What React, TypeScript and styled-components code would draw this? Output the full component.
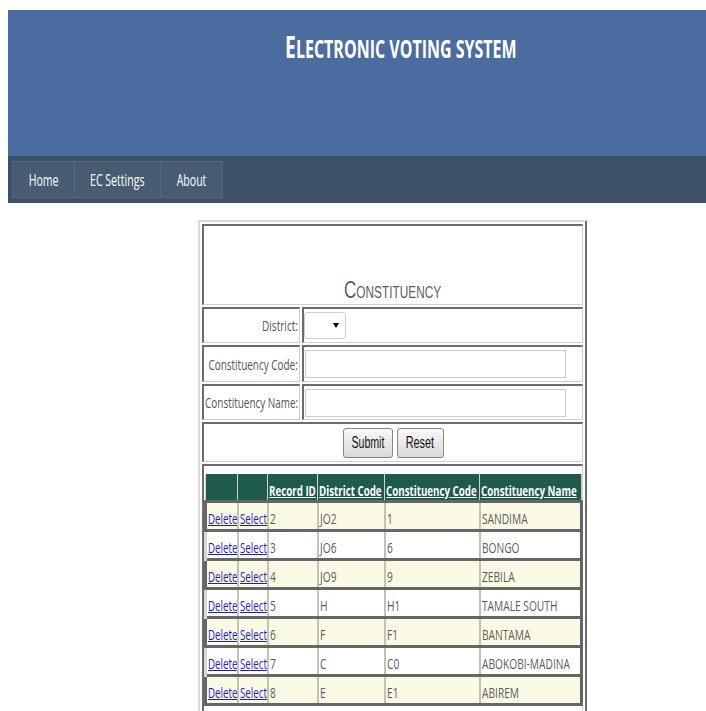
import React from "react";
import styled, { createGlobalStyle } from "styled-components";

const SANS = `"Open Sans", "DejaVu Sans", sans-serif`;
const ARIAL = `"Liberation Sans", Arial, sans-serif`;

const Global = createGlobalStyle`
  html, body { margin: 0; padding: 0; background: #ffffff; }
  body {
    padding: 10px 0 0 8px;
    font-family: ${SANS};
    overflow: hidden;
  }
`;

/* Narrow lettering: the face is drawn horizontally condensed. */
const Narrow = styled.span<{ $sx?: number; $origin?: string }>`
  display: inline-block;
  white-space: nowrap;
  text-decoration: inherit;
  transform: scaleX(${(p) => p.$sx ?? 0.68});
  transform-origin: ${(p) => p.$origin ?? "left"} center;
`;

const Banner = styled.header`
  background: #4b6c9f;
  height: 146px;
  box-sizing: border-box;
  display: flex;
  justify-content: center;
  padding: 17px 0 0 88px;
`;

const SiteTitle = styled.h1`
  margin: 0;
  color: #ffffff;
  font-family: ${SANS};
  font-weight: 700;
  font-size: 25px;
  line-height: 40px;
  text-transform: uppercase;
  &::first-letter { font-size: 30px; }
`;

const NavBar = styled.nav`
  background: #3d5169;
  height: 47px;
  display: flex;
  align-items: center;
  padding-left: 4px;
`;

const NavItem = styled.a<{ $w: number }>`
  width: ${(p) => p.$w}px;
  height: 37px;
  box-sizing: border-box;
  display: flex;
  align-items: center;
  justify-content: center;
  background: #475b73;
  border: 1px solid #53677f;
  margin-right: -1px;
  color: #ffffff;
  font-size: 16px;
  text-decoration: none;
`;

const FormTable = styled.table`
  margin: 17px 0 0 190px;
  width: 389px;
  border-style: solid;
  border-width: 2px;
  border-color: #dadada #6c6c6c #6c6c6c #dadada;
  border-spacing: 2px;
  table-layout: fixed;
`;

const Cell = styled.td<{ $h?: number; $align?: string; $valign?: string }>`
  border-style: solid;
  border-width: 2px 1px 1px 2px;
  border-color: #6c6c6c #d0d0d0 #d0d0d0 #6c6c6c;
  padding: 0;
  height: ${(p) => (p.$h ? `${p.$h}px` : "auto")};
  text-align: ${(p) => p.$align || "left"};
  vertical-align: ${(p) => p.$valign || "middle"};
  box-sizing: border-box;
  color: #555555;
  font-size: 14px;
`;

const LabelBox = styled.div`
  display: flex;
  justify-content: flex-end;
  padding-right: 1px;
`;

const FormTitle = styled.div`
  font-family: ${ARIAL};
  font-variant: small-caps;
  font-size: 23px;
  line-height: 26px;
  color: #5e5e5e;
  padding-bottom: 1px;
`;

const SelectWrap = styled.span`
  position: relative;
  display: inline-block;
  vertical-align: middle;
`;

const DistrictSelect = styled.select`
  appearance: none;
  width: 42px;
  height: 27px;
  border: 1px solid #d0d0d0;
  border-radius: 3px;
  background: #ffffff;
  display: block;
`;

const Caret = styled.span`
  position: absolute;
  right: 7px;
  top: 11px;
  width: 0;
  height: 0;
  border-left: 3px solid transparent;
  border-right: 3px solid transparent;
  border-top: 5px solid #000;
  pointer-events: none;
`;

const TextInput = styled.input`
  width: 261px;
  height: 28px;
  box-sizing: border-box;
  border: 1px solid #cccccc;
  margin: 0 0 0 1px;
  display: block;
`;

const ButtonRow = styled.div`
  display: flex;
  justify-content: center;
  gap: 4px;
`;

const Button = styled.button<{ $w: number }>`
  width: ${(p) => p.$w}px;
  height: 30px;
  padding: 0;
  display: flex;
  align-items: center;
  justify-content: center;
  border: 1px solid #868686;
  border-radius: 3px;
  background: linear-gradient(#f8f8f8, #d9d9d9);
  font-family: ${ARIAL};
  font-size: 16px;
  color: #111;
`;

const GridCell = styled(Cell)`
  padding: 8px 0 12px 0;
  vertical-align: top;
`;

const Grid = styled.table`
  border-collapse: collapse;
  table-layout: fixed;
  width: 376px;
`;

const HeadCell = styled.th`
  height: 26px;
  box-sizing: border-box;
  background: #1e5b4b;
  border: 1px solid #c9d4cf;
  border-top: none;
  padding: 6px 1px 0;
  line-height: 20px;
  text-align: left;
  vertical-align: bottom;
  white-space: nowrap;
  overflow: hidden;
  color: #ffffff;
  font-size: 15px;
  font-weight: 700;
  a { color: #ffffff; text-decoration: underline; }
`;

const Row = styled.tr<{ $alt: boolean }>`
  background: ${(p) => (p.$alt ? "#fafae4" : "#ffffff")};
  border-style: solid;
  border-width: ${(p) => (p.$alt ? "3px" : "0 3px 0 3px")};
  border-color: ${(p) => (p.$alt ? "#666666" : "#666666 #666666 #666666 #d6d6d6")};
`;

const DataCell = styled.td`
  padding: 4px 1px 0;
  line-height: 22px;
  border-left: 2px solid #c4c2b6;
  white-space: nowrap;
  overflow: hidden;
  color: #5c5c5c;
  font-size: 15px;
  vertical-align: middle;
  &:first-child { border-left: none; }
`;

const ActionLink = styled.a`
  color: #1b1bd6;
  text-decoration: underline;
`;

const records = [
  { id: 2, district: "JO2", code: "1", name: "SANDIMA" },
  { id: 3, district: "JO6", code: "6", name: "BONGO" },
  { id: 4, district: "JO9", code: "9", name: "ZEBILA" },
  { id: 5, district: "H", code: "H1", name: "TAMALE SOUTH" },
  { id: 6, district: "F", code: "F1", name: "BANTAMA" },
  { id: 7, district: "C", code: "C0", name: "ABOKOBI-MADINA" },
  { id: 8, district: "E", code: "E1", name: "ABIREM" },
];

const columns = [
  { label: "", w: 32 },
  { label: "", w: 30 },
  { label: "Record ID", w: 50 },
  { label: "District Code", w: 67 },
  { label: "Constituency Code", w: 95 },
  { label: "Constituency Name", w: 102 },
];

const navLinks = [
  { label: "Home", w: 63 },
  { label: "EC Settings", w: 87 },
  { label: "About", w: 63 },
];

const formFields = [
  { label: "Constituency Code:", h: 37 },
  { label: "Constituency Name:", h: 36 },
];

export default function App() {
  return (
    <>
      <Global />
      <Banner>
        <Narrow $sx={0.64} $origin="center">
          <SiteTitle>Electronic voting system</SiteTitle>
        </Narrow>
      </Banner>
      <NavBar>
        {navLinks.map((n) => (
          <NavItem key={n.label} href="#" $w={n.w}>
            <Narrow $sx={0.66} $origin="center">{n.label}</Narrow>
          </NavItem>
        ))}
      </NavBar>

      <FormTable>
        <colgroup>
          <col style={{ width: 98 }} />
          <col />
        </colgroup>
        <tbody>
          <tr>
            <Cell colSpan={2} $h={81} $align="center" $valign="bottom">
              <FormTitle>
                <Narrow $sx={0.74} $origin="center">Constituency</Narrow>
              </FormTitle>
            </Cell>
          </tr>
          <tr>
            <Cell $h={36}>
              <LabelBox><Narrow $sx={0.72} $origin="right">District:</Narrow></LabelBox>
            </Cell>
            <Cell $h={36}>
              <SelectWrap>
                <DistrictSelect aria-label="District" />
                <Caret />
              </SelectWrap>
            </Cell>
          </tr>
          {formFields.map((f) => (
            <tr key={f.label}>
              <Cell $h={f.h}>
                <LabelBox><Narrow $sx={0.71} $origin="right">{f.label}</Narrow></LabelBox>
              </Cell>
              <Cell $h={f.h}>
                <TextInput type="text" />
              </Cell>
            </tr>
          ))}
          <tr>
            <Cell colSpan={2} $h={40}>
              <ButtonRow>
                <Button $w={50}><Narrow $sx={0.66} $origin="center">Submit</Narrow></Button>
                <Button $w={47}><Narrow $sx={0.68} $origin="center">Reset</Narrow></Button>
              </ButtonRow>
            </Cell>
          </tr>
          <tr>
            <GridCell colSpan={2}>
              <Grid>
                <colgroup>
                  {columns.map((c, i) => (
                    <col key={i} style={{ width: c.w }} />
                  ))}
                </colgroup>
                <thead>
                  <tr>
                    {columns.map((c, i) => (
                      <HeadCell key={i}>
                        {c.label && (
                          <a href="#"><Narrow $sx={0.65}>{c.label}</Narrow></a>
                        )}
                      </HeadCell>
                    ))}
                  </tr>
                </thead>
                <tbody>
                  {records.map((r, i) => (
                    <Row key={r.id} $alt={i % 2 === 0}>
                      <DataCell><ActionLink href="#"><Narrow $sx={0.65}>Delete</Narrow></ActionLink></DataCell>
                      <DataCell><ActionLink href="#"><Narrow $sx={0.65}>Select</Narrow></ActionLink></DataCell>
                      <DataCell><Narrow>{r.id}</Narrow></DataCell>
                      <DataCell><Narrow>{r.district}</Narrow></DataCell>
                      <DataCell><Narrow>{r.code}</Narrow></DataCell>
                      <DataCell><Narrow>{r.name}</Narrow></DataCell>
                    </Row>
                  ))}
                </tbody>
              </Grid>
            </GridCell>
          </tr>
        </tbody>
      </FormTable>
    </>
  );
}
